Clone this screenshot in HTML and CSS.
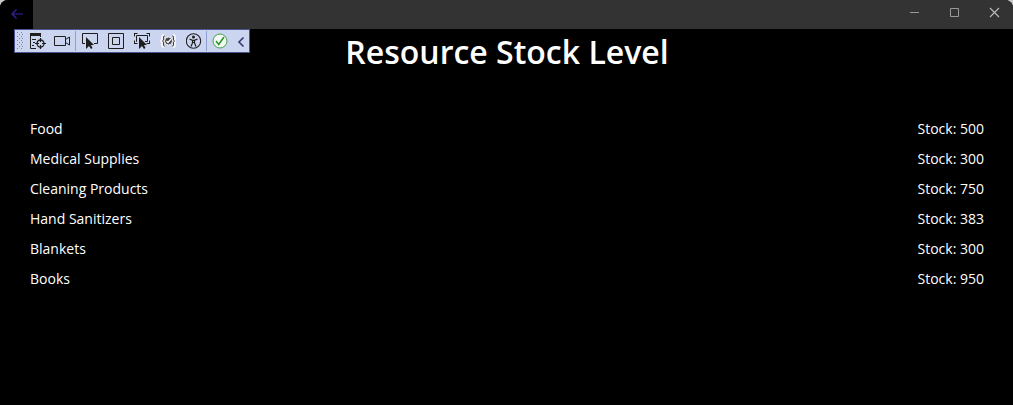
FILE: index.html
```html
<!DOCTYPE html>
<html lang="en">
<head>
<meta charset="utf-8">
<meta name="viewport" content="width=device-width, initial-scale=1">
<title>Resource Stock Level</title>
<link rel="stylesheet" href="styles.css">
</head>
<body>
<div class="window">
  <header class="titlebar">
    <button class="back" type="button" aria-label="Back">
      <svg class="icon" viewBox="0 0 16 16"><path d="M14 7H3M7.500 2.500 3 7l4.500 4.500" fill="none" stroke="#3a20a0" stroke-width="1.200"/></svg>
    </button>
    <div class="captions">
      <button class="caption" type="button" aria-label="Minimize"><svg class="icon" viewBox="0 0 16 16"><path d="M5 7.500h9" stroke="#999"/></svg></button>
      <button class="caption" type="button" aria-label="Maximize"><svg class="icon" viewBox="0 0 16 16"><path d="M5.500 3.500h8v8h-8z" fill="none" stroke="#999"/></svg></button>
      <button class="caption" type="button" aria-label="Close"><svg class="icon" viewBox="0 0 16 16"><path d="m5 3 9 9M14 3l-9 9" stroke="#bbb" stroke-width="1.100"/></svg></button>
    </div>
  </header>

  <div class="toolbar" role="toolbar" aria-label="Debug tools">
    <svg class="grip" viewBox="0 0 6 18"><path d="M.5 0v18M4.500 0v18" stroke="#7a83a8" stroke-dasharray="1 3"/><path d="M2.500 2v16M5.500 2v16" stroke="#7a83a8" stroke-dasharray="1 3"/></svg>
    <div class="group">
      <button class="tool" type="button" aria-label="Live visual tree"><svg class="icon" viewBox="0 0 16 16"><path d="M0 0h11v3H0z" fill="#1e1e1e"/><path d="M.5 2v13.500H6M10.500 3v1M2 6.500h4M3 9.500h2M2 12.500h2" fill="none" stroke="#1e1e1e"/><circle cx="10.500" cy="10.500" r="3.500" fill="none" stroke="#1e1e1e" stroke-width="1.300"/><path d="M10.500 5v4M10.500 12v4M5 10.500h4M12 10.500h4" stroke="#1e1e1e" stroke-width="1.200"/></svg></button>
      <button class="tool" type="button" aria-label="Record"><svg class="icon" viewBox="0 0 16 16"><path d="M.5 3.500h11v9H.5zM11.500 6.500l4-2.500v8l-4-2.500" fill="none" stroke="#1e1e1e"/></svg></button>
    </div>
    <span class="divider"></span>
    <div class="group spaced">
      <button class="tool" type="button" aria-label="Select element"><svg class="icon" viewBox="0 0 16 16"><path d="M3 10.500H.5v-10h15v10H12" fill="none" stroke="#1e1e1e"/><path d="M4 4v12l3-3 2 3 1.500-1L9 12h3z" fill="#1e1e1e"/></svg></button>
      <button class="tool" type="button" aria-label="Display layout adorners"><svg class="icon" viewBox="0 0 16 16"><path d="M.5.5h15v15H.5zM4.500 4.500h7v7h-7z" fill="none" stroke="#1e1e1e"/></svg></button>
      <button class="tool" type="button" aria-label="Track focused element"><svg class="icon" viewBox="0 0 16 16"><path d="M0 .5h3.500M.5 0v3.500M12.500.5H16M15.500 0v3.500M0 10.500h3.500M.5 11V7.500M12.500 10.500H16M15.500 11V7.500M3 8.500h-.5v-6h11v6H11" fill="none" stroke="#1e1e1e"/><path d="M5 4v12l3-3 2 3 1.500-1L10 12h3z" fill="#1e1e1e"/></svg></button>
      <button class="tool" type="button" aria-label="Binding failures"><svg class="icon" viewBox="0 0 16 16"><path d="M4.500 2.500H4Q2.500 2.500 2.500 4v2.500L1.500 8l1 1.500V12q0 1.500 1.500 1.500h.5M12.500 2.500h.5q1.500 0 1.500 1.500v2.500l1 1.500-1 1.500V12q0 1.500-1.500 1.500h-.5" fill="none" stroke="#f4f4f4" stroke-width="3"/><path d="M5 3h-.5Q3.500 3 3.500 4v3L2.500 8l1 1v3q0 1 1 1H5M12 3h.5q1 0 1 1v3l1 1-1 1v3q0 1-1 1H12" fill="none" stroke="#444"/><circle cx="8.500" cy="8" r="4" fill="#444" stroke="#f4f4f4"/><path d="m6.500 8 1.500 1.500L11 6" fill="none" stroke="#fff" stroke-width="1.200"/></svg></button>
      <button class="tool" type="button" aria-label="Scan for accessibility issues"><svg class="icon" viewBox="1 0 16 16"><circle cx="8.500" cy="8" r="7.200" fill="none" stroke="#1e1e1e" stroke-width="1.100"/><circle cx="8.500" cy="4" r="1.500" fill="#1e1e1e"/><path d="m4.500 6 3 1.300h2l3-1.300M7.500 7v3L6 13.500M9.500 7v3l1.500 3.500M7.500 9.500h2" fill="none" stroke="#1e1e1e" stroke-width="1.200"/></svg></button>
    </div>
    <span class="divider flush"></span>
    <button class="tool" type="button" aria-label="Hot Reload available"><svg class="icon" viewBox="0 0 16 16"><circle cx="8" cy="8" r="7" fill="#f4fbf4" stroke="#43a047"/><path d="m4 8 2.700 3.500L12 4" fill="none" stroke="#269329" stroke-width="1.500"/></svg></button>
    <button class="collapse" type="button" aria-label="Collapse toolbar"><svg class="icon" viewBox="0 0 16 16"><path d="M11.500 4.500 7 9l4.500 4.500" fill="none" stroke="#34396f" stroke-width="1.600"/></svg></button>
  </div>

  <main class="content">
    <h1 class="title">Resource Stock Level</h1>
    <ul class="stock">
      <li class="row"><span>Food</span><span>Stock: 500</span></li>
      <li class="row"><span>Medical Supplies</span><span>Stock: 300</span></li>
      <li class="row"><span>Cleaning Products</span><span>Stock: 750</span></li>
      <li class="row"><span>Hand Sanitizers</span><span>Stock: 383</span></li>
      <li class="row"><span>Blankets</span><span>Stock: 300</span></li>
      <li class="row"><span>Books</span><span>Stock: 950</span></li>
    </ul>
  </main>
</div>
</body>
</html>
```
FILE: styles.css
```css
* { box-sizing: border-box; }
body { margin: 0; background: #c8c8c8; font-family: "Open Sans", sans-serif; color: #fff; }
button { display: flex; align-items: center; justify-content: center; padding: 0; border: 0; background: none; }
.window { position: relative; min-height: 100vh; background: #000; border-radius: 8px 8px 0 0; overflow: hidden; }
.icon { display: block; flex: none; width: 16px; height: 16px; }
.titlebar { display: flex; justify-content: space-between; height: 29px; background: #333; }
.back { width: 33px; background: #000; }
.captions { display: flex; align-items: flex-start; }
.caption { width: 40px; height: 26px; }
.toolbar { position: absolute; top: 29px; left: 14px; display: flex; align-items: center; height: 24px; padding: 0 1px 0 2px; border: 1px solid #4a5590; background: #ccd5f0; }
.grip { width: 6px; height: 18px; margin-right: 3px; }
.group { display: flex; }
.spaced { gap: 2px; }
.tool { width: 24px; height: 22px; }
.divider { width: 1px; height: 20px; margin: 0 2px 0 1px; background: #8f9fd0; }
.flush { margin: 0 1px 0 0; }
.collapse { width: 16px; height: 22px; }
.content { padding: 0 29px 0 30px; }
.title { margin: 0; font-size: 32px; font-weight: 600; line-height: 46px; text-align: center; }
.stock { margin: 39px 0 0; padding: 0; list-style: none; }
.row { display: flex; justify-content: space-between; font-size: 14px; line-height: 30px; }
```
